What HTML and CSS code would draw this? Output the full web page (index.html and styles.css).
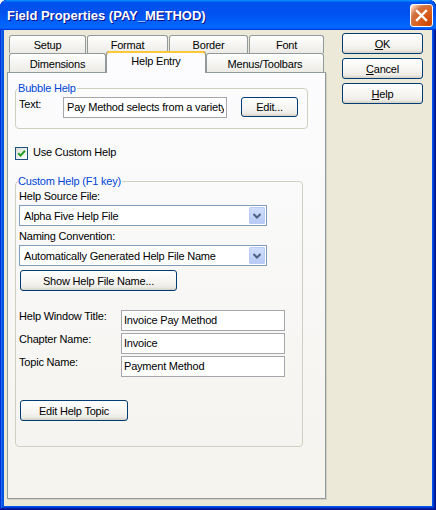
FILE: index.html
```html
<!DOCTYPE html>
<html>
<head>
<meta charset="utf-8">
<link rel="stylesheet" href="styles.css">
</head>
<body>
<div class="window">
  <div class="titlebar">
    <span class="title">Field Properties (PAY_METHOD)</span>
    <span class="close"><svg width="21" height="21" viewBox="0 0 21 21"><path d="M6 6 L15 15 M15 6 L6 15" stroke="#fff" stroke-width="2.4" stroke-linecap="square"/></svg></span>
  </div>
  <div class="client">
    <div class="tabarea">
      <div class="tabrow back">
        <div class="tab t-setup">Setup</div>
        <div class="tab t-format">Format</div>
        <div class="tab t-border">Border</div>
        <div class="tab t-font">Font</div>
      </div>
      <div class="tabrow front">
        <div class="tab t-dim">Dimensions</div>
        <div class="tab t-help sel">Help Entry</div>
        <div class="tab t-menus">Menus/Toolbars</div>
      </div>
      <div class="panel">
        <fieldset class="group bubble">
          <legend>Bubble Help</legend>
          <div class="bubble-row">
            <span class="lbl text-lbl">Text:</span>
            <div class="edit bubble-edit"><span class="clip">Pay Method selects from a variety</span></div>
            <div class="btn edit-btn">Edit...</div>
          </div>
        </fieldset>
        <div class="check-row">
          <span class="checkbox"><svg width="11" height="11" viewBox="0 0 11 11"><path d="M2.2 5.2 L4.5 7.6 L9 2.8" stroke="#21A121" stroke-width="2" fill="none"/></svg></span>
          <span class="check-lbl">Use Custom Help</span>
        </div>
        <fieldset class="group custom">
          <legend>Custom Help (F1 key)</legend>
          <div class="custom-body">
            <div class="lbl src-lbl">Help Source File:</div>
            <div class="combo"><span class="combo-text">Alpha Five Help File</span><span class="arrow"><svg width="16" height="17" viewBox="0 0 16 17"><path d="M4.5 7 L8 10.5 L11.5 7" stroke="#4D6185" stroke-width="2" fill="none"/></svg></span></div>
            <div class="lbl name-lbl">Naming Convention:</div>
            <div class="combo"><span class="combo-text">Automatically Generated Help File Name</span><span class="arrow"><svg width="16" height="17" viewBox="0 0 16 17"><path d="M4.5 7 L8 10.5 L11.5 7" stroke="#4D6185" stroke-width="2" fill="none"/></svg></span></div>
            <div class="btn show-btn">Show Help File Name...</div>
            <div class="fields">
              <span class="lbl">Help Window Title:</span>
              <div class="edit">Invoice Pay Method</div>
              <span class="lbl">Chapter Name:</span>
              <div class="edit">Invoice</div>
              <span class="lbl">Topic Name:</span>
              <div class="edit">Payment Method</div>
            </div>
            <div class="btn topic-btn">Edit Help Topic</div>
          </div>
        </fieldset>
      </div>
    </div>
    <div class="buttons">
      <div class="btn side-btn"><u>O</u>K</div>
      <div class="btn side-btn"><u>C</u>ancel</div>
      <div class="btn side-btn"><u>H</u>elp</div>
    </div>
  </div>
</div>
</body>
</html>
```

FILE: styles.css
```css
html, body {
  margin: 0;
  padding: 0;
  background: #ffffff;
}

.window {
  width: 436px;
  height: 510px;
  box-sizing: border-box;
  display: flex;
  flex-direction: column;
  background: #0055E5;
  box-shadow: inset -1px -1px #00138c, inset 1px 1px #0831d9, inset -2px -2px #001ea0, inset 2px 2px #166aee, inset -3px -3px #003bda, inset 3px 3px #0855dd;
  border-radius: 7px 7px 0 0;
  overflow: hidden;
  font-family: "Liberation Sans", Arial, sans-serif;
  font-size: 11px;
  letter-spacing: -0.2px;
  color: #000;
}

.titlebar {
  flex: none;
  height: 30px;
  box-sizing: border-box;
  display: flex;
  align-items: center;
  justify-content: space-between;
  padding: 0 3px 0 7px;
  background: linear-gradient(180deg, #0997ff, #0053ee 8%, #0050ee 40%, #0066ff 88%, #0066ff 93%, #005bff 95%, #003dd7 96%, #003dd7);
  border-radius: 7px 7px 0 0;
}

.title {
  color: #fff;
  font-weight: bold;
  font-size: 13px;
  letter-spacing: 0;
  text-shadow: 1px 1px #0f1089;
}

.close {
  width: 21px;
  height: 21px;
  border: 1px solid #fff;
  border-radius: 3px;
  display: flex;
  background: radial-gradient(circle at 90% 90%, #cc4600 0%, #dc6527 55%, #cd7546 70%, #ffccb2 90%, #fff 100%);
}

.client {
  flex: 1;
  margin: 0 4px 4px 4px;
  background: #ECE9D8;
  display: flex;
  align-items: flex-start;
}

.tabarea {
  margin: 5px 0 0 3px;
  width: 319px;
  display: flex;
  flex-direction: column;
}

.tabrow {
  display: flex;
  align-items: flex-end;
  padding-left: 2px;
}

.tabrow.back {
  height: 18px;
  gap: 1px;
}

.tabrow.front {
  height: 19px;
}

.tab {
  box-sizing: border-box;
  height: 100%;
  border: 1px solid #919B9C;
  border-bottom: none;
  border-radius: 3px 3px 0 0;
  background: linear-gradient(#ffffff, #ECEBE6);
  display: flex;
  align-items: center;
  justify-content: center;
  padding-top: 1px;
}

.t-setup { width: 77px; }
.t-format { width: 81px; }
.t-border { width: 79px; }
.t-font { width: 75px; }
.t-dim { width: 97px; }
.t-help { width: 100px; }
.t-menus { width: 118px; }

.tab.sel {
  height: 22px;
  margin-bottom: -1px;
  position: relative;
  z-index: 1;
  background: #FCFCFE;
  border-top: none;
  box-shadow: inset 0 2px #FFC83C, inset 0 1px #E68B2C;
  padding-top: 0;
  padding-bottom: 2px;
}

.panel {
  box-sizing: border-box;
  width: 319px;
  height: 427px;
  border: 1px solid #919B9C;
  background: linear-gradient(#FCFCFE, #F4F3EE);
  box-shadow: 1px 1px 0 #D2D0C3;
  padding: 9px 0 0 7px;
}

.group {
  margin: 0;
  padding: 0;
  border: 1px solid #D0D0BF;
  border-radius: 4px;
  box-sizing: border-box;
}

.group legend {
  margin-left: 2px;
  padding: 0 1px 0 0;
  color: #0046D5;
  line-height: 13px;
}

.bubble {
  width: 293px;
}

.bubble-row {
  display: flex;
  align-items: flex-start;
  padding: 2px 0 10px 3px;
}

.lbl {
  line-height: 13px;
}

.text-lbl {
  width: 44px;
  padding-top: 1px;
}

.edit {
  box-sizing: border-box;
  height: 21px;
  width: 164px;
  border: 1px solid #A7A6AA;
  background: #fff;
  padding: 0 2px;
  line-height: 19px;
  white-space: nowrap;
  overflow: hidden;
}

.bubble-edit {
  padding-left: 3px;
}

.clip {
  display: block;
  overflow: hidden;
}

.btn {
  box-sizing: border-box;
  height: 21px;
  border: 1px solid #003C74;
  border-radius: 3px;
  background: linear-gradient(180deg, #ffffff 0%, #F5F4F0 60%, #ECEBE6 85%, #D6D0C5 100%);
  display: flex;
  align-items: center;
  justify-content: center;
}

.edit-btn {
  width: 57px;
  height: 20px;
  margin-left: 14px;
}

.check-row {
  display: flex;
  align-items: center;
  height: 13px;
  margin-top: 18px;
}

.checkbox {
  box-sizing: border-box;
  width: 13px;
  height: 13px;
  border: 1px solid #1C5180;
  background: linear-gradient(135deg, #DCDCD7, #ffffff);
  display: flex;
}

.check-lbl {
  margin-left: 5px;
  line-height: 13px;
  margin-top: -2px;
}

.custom {
  width: 288px;
  margin-top: 15px;
}

.custom-body {
  padding: 2px 0 25px 3px;
  display: flex;
  flex-direction: column;
  align-items: flex-start;
}

.src-lbl {
  margin-top: 0;
}

.combo {
  box-sizing: border-box;
  width: 248px;
  height: 21px;
  margin-top: 2px;
  border: 1px solid #7F9DB9;
  background: #fff;
  padding: 1px;
  display: flex;
  align-items: center;
  justify-content: space-between;
}

.combo-text {
  padding-left: 3px;
}

.arrow {
  box-sizing: border-box;
  width: 16px;
  height: 17px;
  border-radius: 2px;
  background: linear-gradient(#D2DEFB, #B6CAF7);
  box-shadow: inset 0 0 0 1px #BACCF6;
  display: flex;
}

.name-lbl {
  margin-top: 4px;
}

.show-btn {
  width: 157px;
  margin: 4px 0 0 1px;
}

.fields {
  margin-top: 19px;
  display: grid;
  grid-template-columns: 102px 164px;
  row-gap: 2px;
  align-items: start;
}

.topic-btn {
  width: 108px;
  margin: 23px 0 0 1px;
}

.buttons {
  margin: 3px 0 0 16px;
  display: flex;
  flex-direction: column;
  gap: 4px;
}

.side-btn {
  width: 81px;
  height: 21px;
}
```
